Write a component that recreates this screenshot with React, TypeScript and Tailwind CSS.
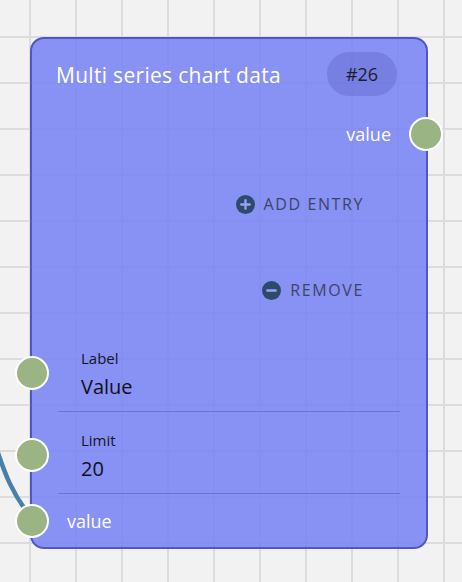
import React from 'react';

const Handle: React.FC<{ className: string }> = ({ className }) => (
    <div className={`absolute w-[34px] h-[34px] rounded-full bg-[#9ab583] border-2 border-white ${className}`} />
);

const ActionIcon: React.FC<{ plus?: boolean }> = ({ plus }) => (
    <svg width="19" height="19" viewBox="0 0 20 20">
        <circle cx="10" cy="10" r="10" fill="#2e4a6b" />
        <line x1="5.5" y1="10" x2="14.5" y2="10" stroke="#9aa2f6" strokeWidth="2.4" strokeLinecap="round" />
        {plus && <line x1="10" y1="5.5" x2="10" y2="14.5" stroke="#9aa2f6" strokeWidth="2.4" strokeLinecap="round" />}
    </svg>
);

const Field: React.FC<{ label: string; value: string; className?: string }> = ({ label, value, className }) => (
    <div className={`relative mx-[26px] pl-[23px] pb-[9px] border-b border-[#6c72d6] ${className ?? ''}`}>
        <Handle className="left-[-43px] top-[8px]" />
        <div className="text-[15px] leading-[20px] text-[#15151f]">{label}</div>
        <div className="mt-[4px] text-[20px] leading-[30px] text-[#101018]">{value}</div>
    </div>
);

const App: React.FC = () => {
    return (
        <div className="relative w-[462px] h-[582px] overflow-hidden bg-[#f2f2f2] bg-[linear-gradient(to_right,#dcdcdc_2px,transparent_2px),linear-gradient(to_bottom,#dcdcdc_2px,transparent_2px)] bg-[size:46px_46px] bg-[position:29px_36px] font-['Open_Sans','Lato',sans-serif]">
            {/* edge coming into the bottom handle */}
            <svg className="absolute left-0 top-0" width="462" height="582">
                <path d="M -3 450 C 5 474, 12 493, 30 516" fill="none" stroke="#4a7fa9" strokeWidth="4.5" />
            </svg>

            <div className="absolute left-[30px] top-[37px] w-[398px] h-[512px] rounded-[14px] border-2 border-[#5256c4] bg-[rgba(117,128,244,0.85)] flex flex-col">
                <div className="flex items-center justify-between pl-6 pr-[29px] mt-[13px] h-[44px]">
                    <span className="text-white text-[21px] tracking-[0.3px] leading-[30px] mt-[1px]">Multi series chart data</span>
                    <span className="w-[70px] h-[44px] rounded-full bg-[rgba(80,85,190,0.3)] flex items-center justify-center text-[18px] text-[#1c1c2c]">#26</span>
                </div>

                <div className="relative mt-[20px] h-[36px] flex items-center justify-end pr-[35px]">
                    <span className="text-white text-[18px]">value</span>
                    <Handle className="right-[-17px] top-[1px]" />
                </div>

                <div className="mt-[34px] h-[36px] flex items-center justify-end pr-[62px] gap-[9px]">
                    <ActionIcon plus />
                    <span className="text-[16px] tracking-[0.1em] text-[#3b4568]">ADD ENTRY</span>
                </div>

                <div className="mt-[50px] h-[36px] flex items-center justify-end pr-[62px] gap-[9px]">
                    <ActionIcon />
                    <span className="text-[16px] tracking-[0.1em] text-[#3b4568]">REMOVE</span>
                </div>

                <Field label="Label" value="Value" className="mt-[40px]" />
                <Field label="Limit" value="20" className="mt-[18px]" />

                <div className="relative mt-[10px] h-[34px] flex items-center pl-[35px]">
                    <Handle className="left-[-17px] top-0" />
                    <span className="text-white text-[18px]">value</span>
                </div>
            </div>
        </div>
    );
};

export default App;
